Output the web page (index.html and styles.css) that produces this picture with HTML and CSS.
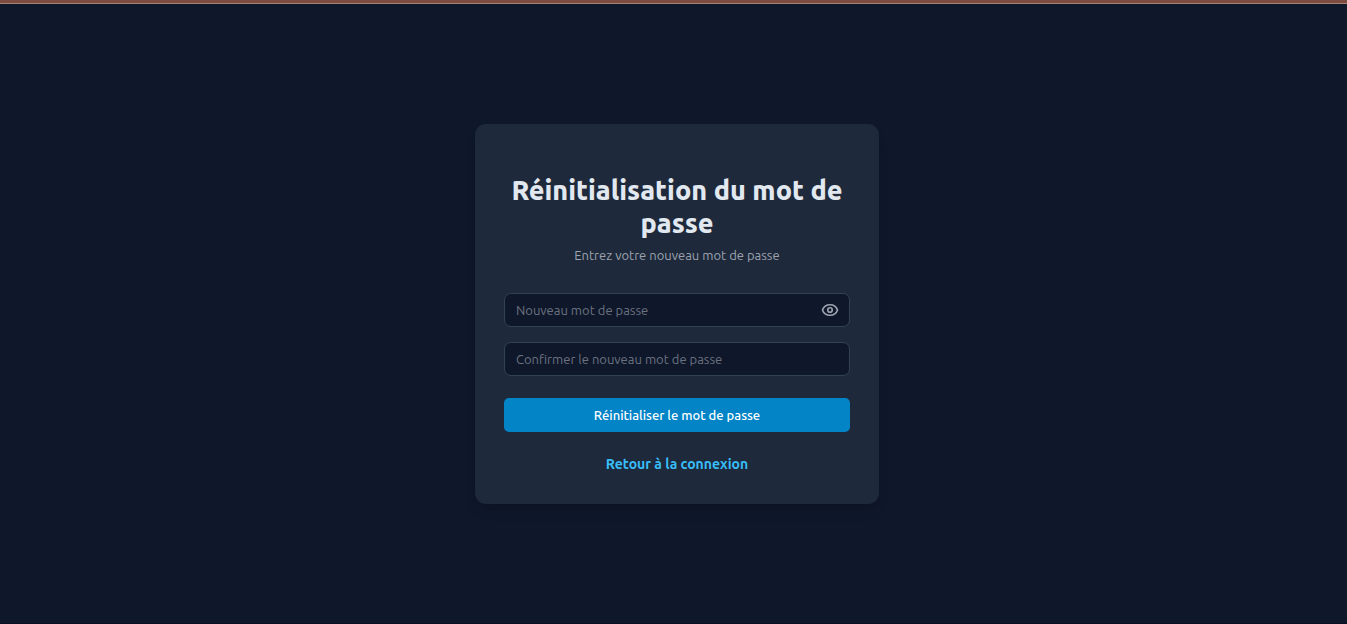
FILE: index.html
```html
<!DOCTYPE html>
<html lang="fr">
<head>
<meta charset="utf-8">
<meta name="viewport" content="width=device-width, initial-scale=1">
<title>Réinitialisation du mot de passe</title>
<link rel="stylesheet" href="styles.css">
</head>
<body class="page">
<main class="main">
  <section class="card">
    <header class="card-header">
      <h1 class="title">Réinitialisation du mot de passe</h1>
      <p class="subtitle">Entrez votre nouveau mot de passe</p>
    </header>
    <form class="form">
      <div class="field">
        <input class="field-input" type="password" aria-label="Nouveau mot de passe" placeholder="Nouveau mot de passe">
        <button class="reveal" type="button" aria-label="Afficher le mot de passe">
          <svg class="reveal-icon" viewBox="0 0 24 24" fill="none" stroke="currentColor" stroke-width="2.2" stroke-linecap="round" stroke-linejoin="round" aria-hidden="true">
            <path d="M2 12C3.500 7.400 7.400 5 12 5S20.500 7.400 22 12C20.500 16.600 16.600 19 12 19S3.500 16.600 2 12Z"/>
            <circle cx="12" cy="12" r="3"/>
          </svg>
        </button>
      </div>
      <div class="field">
        <input class="field-input" type="password" aria-label="Confirmer le nouveau mot de passe" placeholder="Confirmer le nouveau mot de passe">
      </div>
      <button class="submit" type="submit">Réinitialiser le mot de passe</button>
    </form>
    <a class="back" href="#">Retour à la connexion</a>
  </section>
</main>
</body>
</html>
```
FILE: styles.css
```css
* { box-sizing: border-box; }

.page {
  margin: 0;
  min-height: 100vh;
  display: flex;
  flex-direction: column;
  background: #0f172a;
  border-top: 3px solid #7c4c41;
  border-bottom: 1px solid #0c0e22;
  font-family: Ubuntu, "Noto Sans", sans-serif;
  font-size: 14px;
  color: #e2e8f0;
}

.main {
  flex: 1;
  display: flex;
  align-items: center;
  justify-content: center;
  padding: 16px 0 16px 7px;
  border-top: 1px solid #a58378;
}

.card {
  width: 100%;
  max-width: 404px;
  padding: 50px 29px 29px;
  border-radius: 11px;
  background: #1e293b;
  box-shadow: 0 9px 14px -3px rgba(0, 0, 0, 0.1), 0 4px 6px -4px rgba(0, 0, 0, 0.1);
  text-align: center;
}

.title {
  margin: 0;
  font-size: 27px;
  font-weight: 800;
  line-height: 33px;
}

.subtitle {
  margin: 6px 0 0;
  font-size: 13px;
  line-height: 18px;
  color: #9ca3af;
}

.form {
  display: flex;
  flex-direction: column;
  gap: 15px;
  margin-top: 29px;
}

.field {
  display: flex;
  align-items: center;
  height: 34px;
  padding: 0 10px 0 11px;
  border: 1px solid #334155;
  border-radius: 7px;
  background: #0f172a;
}

.field-input {
  flex: 1;
  min-width: 0;
  padding: 0;
  border: 0;
  outline: 0;
  background: transparent;
  font: inherit;
  font-size: 13px;
  line-height: 18px;
  color: #e2e8f0;
}

.field-input::placeholder {
  color: #6b7280;
  opacity: 1;
}

.reveal {
  display: flex;
  padding: 0;
  border: 0;
  background: none;
  color: #9ca3af;
  cursor: pointer;
}

.reveal-icon {
  width: 18px;
  height: 18px;
}

.submit {
  height: 34px;
  margin-top: 7px;
  padding: 0 14px;
  border: 0;
  border-radius: 5px;
  background: #0284c7;
  color: #fff;
  font: inherit;
  font-size: 13px;
  font-weight: 500;
  cursor: pointer;
}

.back {
  display: inline-block;
  margin-top: 21px;
  font-size: 14px;
  font-weight: 600;
  line-height: 22px;
  color: #38bdf8;
  text-decoration: none;
}
```
